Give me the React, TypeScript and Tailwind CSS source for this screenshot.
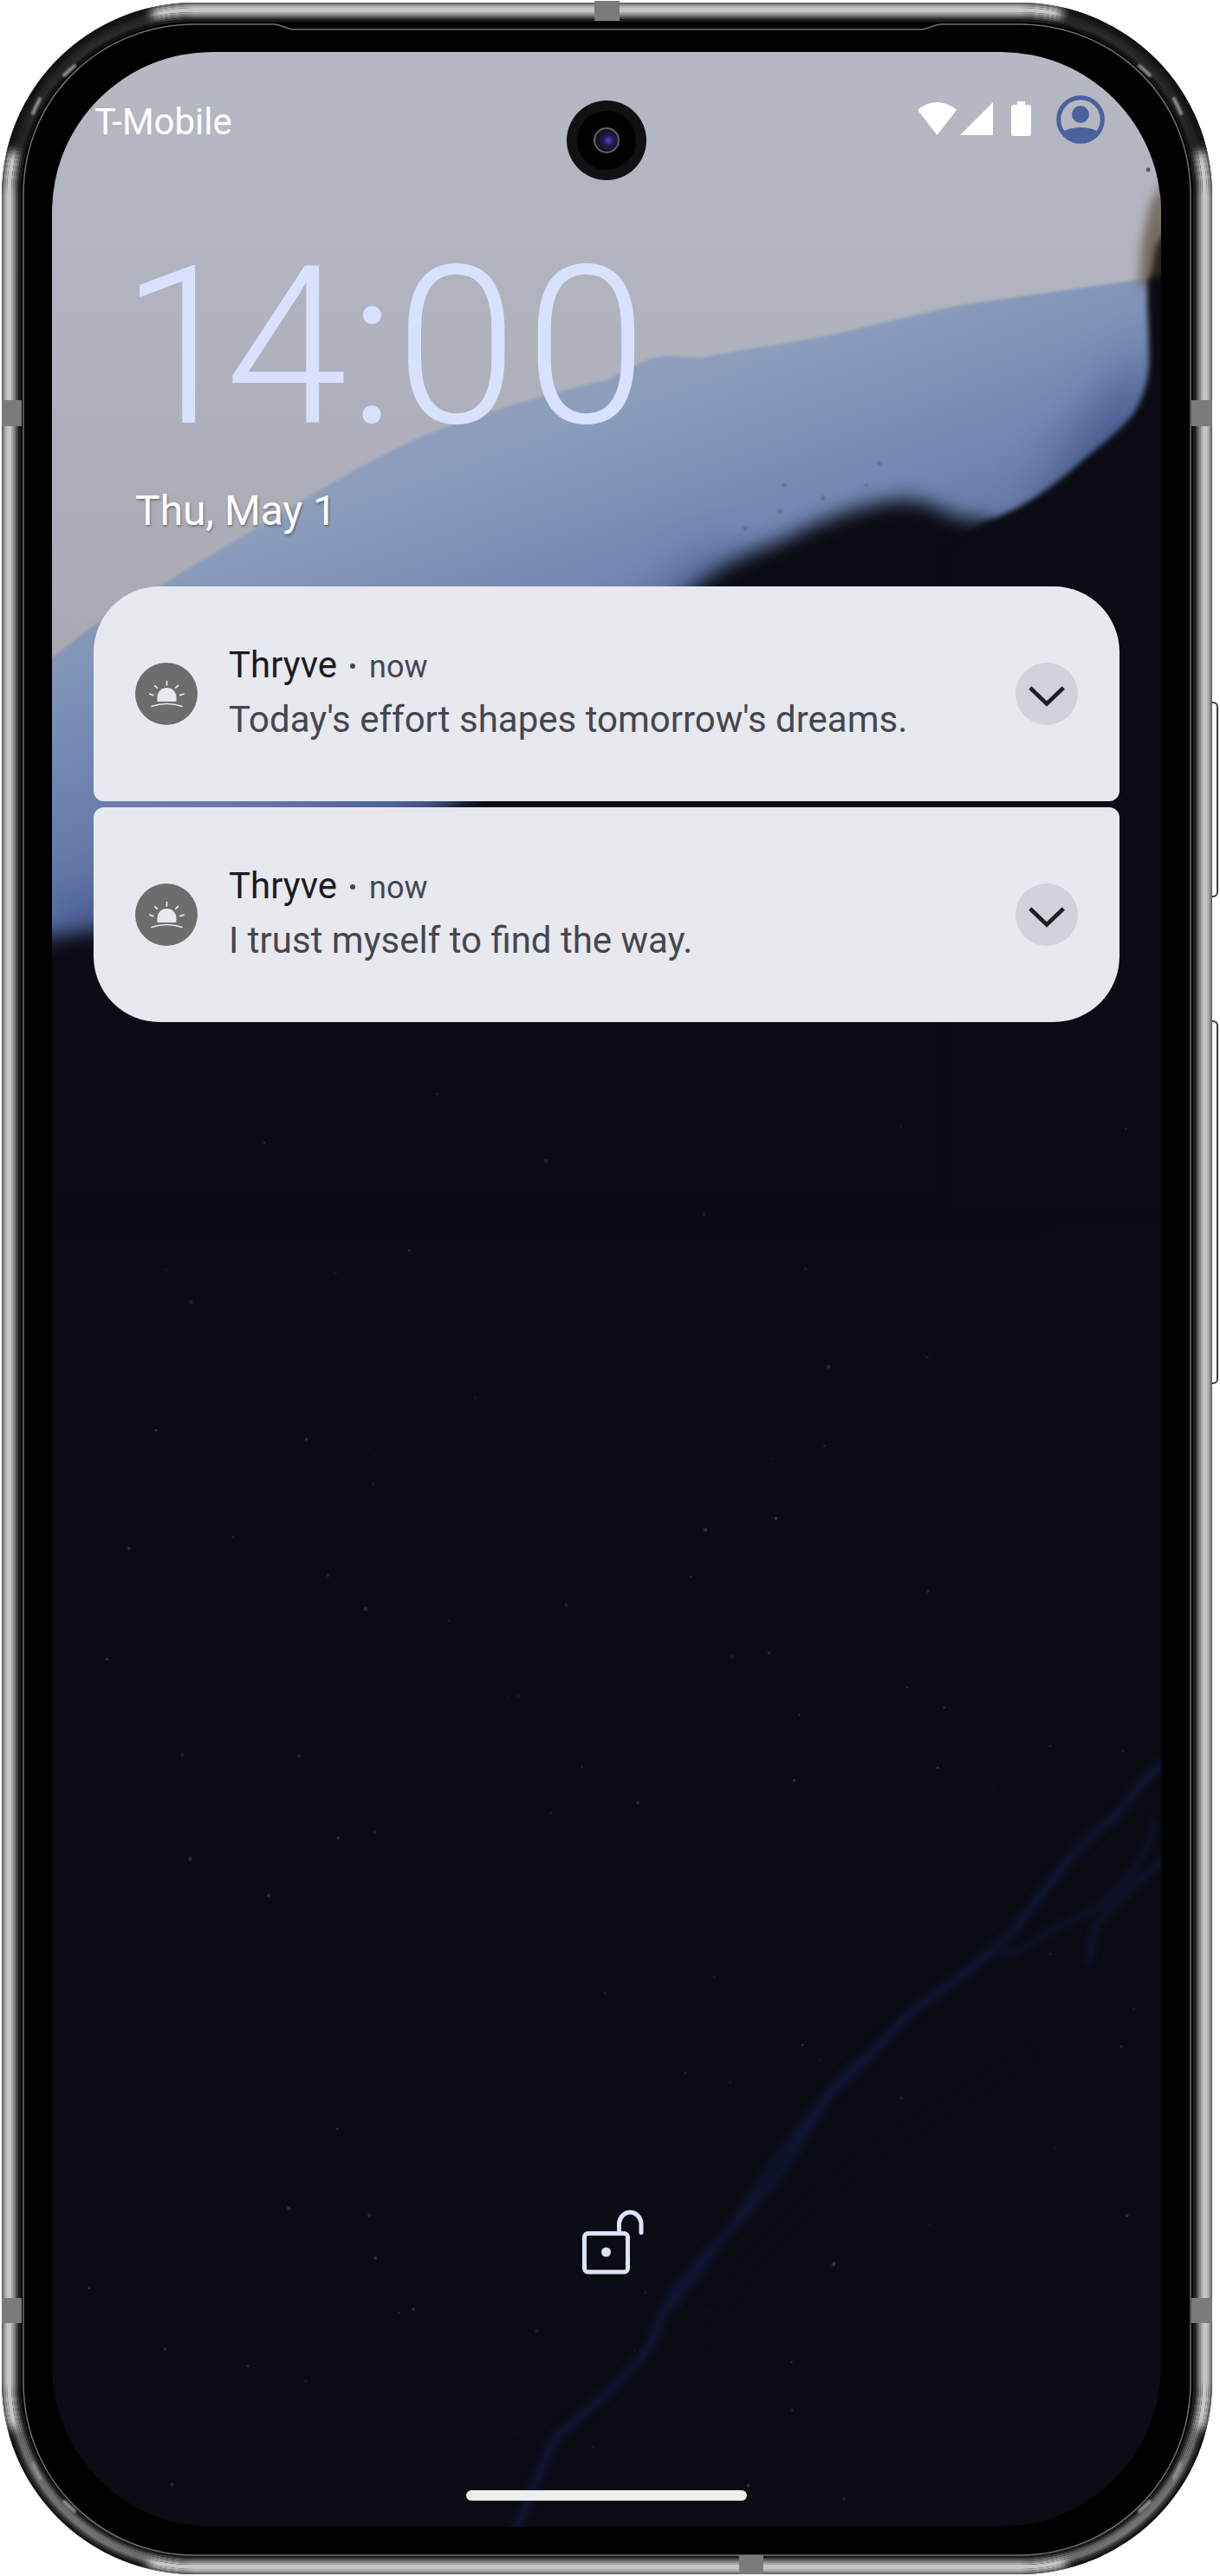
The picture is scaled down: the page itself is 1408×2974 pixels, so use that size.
import React from "react";

const roboto = "font-['Roboto',sans-serif]";

const speckles: { x: number; y: number; r: number; o: number }[] = (() => {
  const out: { x: number; y: number; r: number; o: number }[] = [];
  let s = 12345;
  const rnd = () => {
    s = (s * 1103515245 + 12345) & 0x7fffffff;
    return s / 0x7fffffff;
  };
  for (let i = 0; i < 90; i++) {
    out.push({
      x: 70 + rnd() * 1260,
      y: 1250 + rnd() * 1650,
      r: 1 + rnd() * 1.4,
      o: 0.04 + rnd() * 0.12,
    });
  }
  return out;
})();

function Wallpaper() {
  return (
    <svg className="absolute inset-0 h-full w-full" viewBox="60 60 1280 2857" preserveAspectRatio="none">
      <defs>
        <linearGradient id="sky" x1="0" y1="60" x2="0" y2="800" gradientUnits="userSpaceOnUse">
          <stop offset="0" stopColor="#b6b8c4" />
          <stop offset="0.45" stopColor="#b0b2bd" />
          <stop offset="1" stopColor="#a9a8b2" />
        </linearGradient>
        <linearGradient id="blue" x1="700" y1="470" x2="830" y2="840" gradientUnits="userSpaceOnUse">
          <stop offset="0" stopColor="#8c9ebc" />
          <stop offset="0.45" stopColor="#7388b2" />
          <stop offset="1" stopColor="#566b9e" />
        </linearGradient>
        <filter id="b1" x="-10%" y="-10%" width="120%" height="120%" colorInterpolationFilters="sRGB"><feGaussianBlur stdDeviation="1.5" /></filter>
        <filter id="b3" x="-10%" y="-10%" width="120%" height="120%" colorInterpolationFilters="sRGB"><feGaussianBlur stdDeviation="3" /></filter>
        <filter id="b6" x="-30%" y="-30%" width="160%" height="160%" colorInterpolationFilters="sRGB"><feGaussianBlur stdDeviation="6" /></filter>
        <filter id="b12" x="-20%" y="-20%" width="140%" height="140%" colorInterpolationFilters="sRGB"><feGaussianBlur stdDeviation="11" /></filter>
        <filter id="b30" x="-20%" y="-20%" width="140%" height="140%" colorInterpolationFilters="sRGB"><feGaussianBlur stdDeviation="28" /></filter>
        <filter id="v" x="-10%" y="-10%" width="120%" height="120%" colorInterpolationFilters="sRGB"><feGaussianBlur stdDeviation="4" /></filter>
      </defs>
      <rect x="60" y="60" width="1280" height="2857" fill="#0a0b13" />
      <rect x="60" y="60" width="1280" height="1100" fill="url(#sky)" />
      <path
        d="M40 775 L108 722 L357 573 C400 548 450 520 491 502 C560 476 640 452 700 439 C730 425 745 412 770 411 L810 413 C860 402 920 396 974 383 C1030 370 1070 360 1111 352 L1321 322 L1360 322 L1360 1200 L40 1200 Z"
        fill="url(#blue)"
        filter="url(#b1)"
      />
      <path
        d="M1240 500 L1330 400 L1340 600 L1000 700 L820 640 L600 860 L300 980 L60 1060 L60 1200 L1000 1000 Z"
        fill="#3f5488"
        opacity="0.8"
        filter="url(#b30)"
      />
      <path d="M1345 205 L1328 235 L1318 280 L1314 330 L1350 335 Z" fill="#6a5f50" opacity="0.85" filter="url(#b6)" />
      <path d="M1350 255 L1334 285 L1326 330 L1350 335 Z" fill="#221c15" opacity="0.9" filter="url(#b3)" />
      <path
        d="M1145 600 C1110 602 1095 592 1079 585 C1060 576 1040 574 1010 582 C975 590 940 604 900 625 C860 640 830 655 800 680 C730 740 680 790 640 830 C590 885 550 915 510 935 C420 970 300 1010 220 1040 C170 1060 130 1072 100 1076 L30 1086 L30 1400 L1200 1400 Z"
        fill="#0a0b13"
        filter="url(#b12)"
      />
      <path
        d="M1400 300 L1326 322 C1322 345 1326 370 1326 400 C1328 432 1322 455 1308 478 C1290 500 1270 514 1240 540 C1205 570 1170 592 1134 603 L1090 640 L1090 1400 L1400 1400 Z"
        fill="#0a0b13"
        filter="url(#b3)"
      />
      <circle cx="1325" cy="196" r="2.5" fill="#5e5d5e" />
      <g fill="#0a0b13" opacity="0.35" filter="url(#b1)">
        <circle cx="1015" cy="535" r="2" /><circle cx="1000" cy="560" r="1.5" /><circle cx="900" cy="590" r="2" />
        <circle cx="905" cy="560" r="2" /><circle cx="950" cy="575" r="2" /><circle cx="860" cy="610" r="2" />
      </g>
      <g fill="none" stroke="#111839" strokeLinecap="round" opacity="0.8" filter="url(#v)">
        <path strokeWidth="11" d="M1346 2034 C1320 2050 1300 2085 1284 2099 C1240 2130 1200 2190 1170 2229 C1130 2270 1080 2300 1042 2331 C1010 2370 985 2395 956 2420 C930 2460 905 2505 883 2530 C850 2570 825 2590 800 2619 C780 2640 765 2665 759 2688 C745 2730 680 2780 640 2815 C625 2850 610 2885 594 2925" />
        <path strokeWidth="7" d="M1042 2331 C1020 2350 1005 2370 975 2392 C950 2420 920 2460 890 2500 C860 2540 830 2600 775 2665" />
        <path strokeWidth="8" d="M1346 2146 C1320 2165 1290 2190 1266 2222 C1260 2240 1258 2250 1257 2263" />
        <path strokeWidth="6" d="M1330 2100 C1335 2125 1310 2160 1280 2190 C1260 2210 1230 2220 1211 2229 C1190 2245 1175 2255 1157 2256" />
        <path strokeWidth="3" stroke="#10131f" d="M1190 2370 C1130 2410 1060 2450 1000 2490 C950 2530 900 2570 860 2620 C840 2650 830 2680 820 2700" />
      </g>
      <g fill="#ffffff">
        {speckles.map((d, i) => (
          <circle key={i} cx={d.x} cy={d.y} r={d.r} opacity={d.o} />
        ))}
      </g>
    </svg>
  );
}

const corners = [
  "",
  "translate(1401 0) scale(-1 1)",
  "translate(0 2975) scale(1 -1)",
  "translate(1401 2975) scale(-1 -1)",
];

function ring(d: number, color: string, w = 2) {
  const i = d + w / 2;
  return (
    <rect
      key={d}
      x={2 + i}
      y={3 + i}
      width={1397 - 2 * i}
      height={2969 - 2 * i}
      rx={Math.max(222 - i, 0)}
      fill="none"
      stroke={color}
      strokeWidth={w}
    />
  );
}

function Frame() {
  return (
    <svg className="pointer-events-none absolute left-0 top-0 h-[2974px] w-[1408px]" viewBox="0 0 1408 2974">
      <defs>
        <filter id="fb" x="-30%" y="-30%" width="160%" height="160%" colorInterpolationFilters="sRGB"><feGaussianBlur stdDeviation="6" /></filter>
        <filter id="fs" x="-40%" y="-40%" width="180%" height="180%" colorInterpolationFilters="sRGB"><feGaussianBlur stdDeviation="1" /></filter>
        <clipPath id="phone"><rect x="2" y="3" width="1397" height="2969" rx="222" /></clipPath>
      </defs>
      <g fill="#ffffff" stroke="#3c3c3c" strokeWidth="2">
        <rect x="1392" y="811" width="13" height="224" rx="5" />
        <rect x="1392" y="1179" width="13" height="418" rx="5" />
      </g>
      {ring(0, "#6a6a6a", 2)}
      {ring(2, "#979797", 2)}
      {ring(4, "#b4b4b4", 2)}
      {ring(6, "#c6c6c6", 5)}
      {ring(11, "#a6a6a6", 2)}
      {ring(13, "#8a8a8a", 2)}
      {ring(15, "#666666", 2)}
      {ring(17, "#3e3e3e", 2)}
      {ring(19, "#1c1c1c", 3)}
      {ring(22, "#000000", 3)}
      <g clipPath="url(#phone)">
        {corners.map((t, i) => (
          <g key={i} transform={t}>
            {i < 2 ? (
              <path d="M14 175 A212 212 0 0 1 175 14" fill="none" stroke="#000000" strokeWidth="26" opacity="0.88" filter="url(#fb)" />
            ) : (
              <path d="M10 170 A216 216 0 0 1 170 10" fill="none" stroke="#000000" strokeWidth="18" opacity="0.92" filter="url(#fb)" />
            )}
            <path d="M38 131 A208 208 0 0 1 46 114" fill="none" stroke="#8f8f8f" strokeWidth="4" strokeLinecap="round" filter="url(#fs)" />
            <path d="M74 87 A208 208 0 0 1 86 76" fill="none" stroke="#8f8f8f" strokeWidth="4" strokeLinecap="round" filter="url(#fs)" />
          </g>
        ))}
      </g>
      <path
        d="M27 320 L27 225 C27 110 118 28 225 28 L315 28 C325 28 330 34 340 34 L1062 34 C1072 34 1077 28 1087 28 L1176 28 C1283 28 1374 110 1374 225 L1374 2750 C1374 2865 1283 2950 1176 2950 L225 2950 C118 2950 27 2865 27 2750 Z"
        fill="none"
        stroke="#6f6f6f"
        strokeWidth="1.5"
      />
      <g fill="#7a7c7a">
        <rect x="686" y="1" width="29" height="23" />
        <rect x="853" y="2950" width="28" height="22" />
        <rect x="2" y="462" width="23" height="30" />
        <rect x="1375" y="462" width="24" height="30" />
        <rect x="2" y="2653" width="23" height="29" />
        <rect x="1375" y="2653" width="24" height="29" />
      </g>
    </svg>
  );
}

function SunIcon() {
  return (
    <span className="flex h-[72px] w-[72px] shrink-0 items-center justify-center rounded-full bg-[#6d6d6d]">
      <svg width="72" height="72" viewBox="0 0 72 72" fill="none">
        <path d="M25.5 45 V40 A11 11 0 0 1 47.5 40 V45 Z" fill="#e8e8ef" />
        <g stroke="#e8e8ef" strokeWidth="1.7" strokeLinecap="round">
          <path d="M36.5 21.5 V26" />
          <path d="M22.8 26.8 L25.3 29.2" />
          <path d="M49.5 26.4 L46.8 29.2" />
          <path d="M16.8 36.2 L20.8 37.6" />
          <path d="M56 36.2 L51.8 37.6" />
          <path d="M19 50.5 Q36.5 44.5 54 50.5" />
        </g>
      </svg>
    </span>
  );
}

function Chevron() {
  return (
    <span className="flex h-[72px] w-[72px] shrink-0 items-center justify-center rounded-full bg-[#d2d2da]">
      <svg width="72" height="72" viewBox="0 0 72 72" fill="none">
        <path d="M16.8 29 L36 47.5 L55.4 29" stroke="#1f1f23" strokeWidth="4.6" />
      </svg>
    </span>
  );
}

function Notification({ text, corner }: { text: string; corner: string }) {
  return (
    <div className={`flex h-[248px] items-center bg-[#e8e8ef] pl-[48px] pr-[48px] ${corner}`}>
      <SunIcon />
      <div className="ml-[36px] flex min-w-0 flex-1 flex-col">
        <div className="-mt-[3px] flex h-[63px] items-baseline leading-[64px]">
          <span className="text-[42px] text-[#1b1b1f]">Thryve</span>
          <span className="ml-[15px] inline-block h-[6px] w-[6px] -translate-y-[10px] rounded-full bg-[#45464f]" />
          <span className="ml-[16px] text-[36px] text-[#45464f]">now</span>
        </div>
        <div className="h-[64px] text-[42px] leading-[64px] text-[#45464f]">{text}</div>
      </div>
      <Chevron />
    </div>
  );
}

function StatusIcons() {
  return (
    <div className="flex items-center">
      <svg width="45" height="38" viewBox="0 0 45 38" className="-mt-[2px]">
        <path d="M22.5 38 L0 9 C6 3.5 14 0 22.5 0 C31 0 39 3.5 45 9 Z" fill="#ffffff" />
      </svg>
      <svg width="38" height="38" viewBox="0 0 38 38" className="-mt-[2px] ml-[4px]">
        <path d="M38 0 V38 H0 Z" fill="#ffffff" />
      </svg>
      <svg width="23" height="40" viewBox="0 0 23 40" className="-mt-[2px] ml-[21px]">
        <path d="M7 0 H16 V4 H20 A3 3 0 0 1 23 7 V37 A3 3 0 0 1 20 40 H3 A3 3 0 0 1 0 37 V7 A3 3 0 0 1 3 4 H7 Z" fill="#ffffff" />
      </svg>
      <svg width="56" height="56" viewBox="0 0 56 56" className="ml-[29px]">
        <defs>
          <clipPath id="av"><circle cx="28" cy="28" r="23" /></clipPath>
        </defs>
        <circle cx="28" cy="28" r="25.3" fill="none" stroke="#4a629b" strokeWidth="5" />
        <circle cx="28" cy="22" r="10" fill="#4a629b" />
        <ellipse cx="28" cy="57" rx="31" ry="20" fill="#4a629b" clipPath="url(#av)" />
      </svg>
    </div>
  );
}

function LockIcon() {
  return (
    <svg width="90" height="84" viewBox="655 2546 90 84" fill="none" stroke="#dde2fb">
      <rect x="674.5" y="2578.5" width="50" height="44.5" rx="4" strokeWidth="5" />
      <path d="M714.5 2576 V2566 A13 15 0 0 1 740 2566 V2577.5" strokeWidth="5" strokeLinecap="round" />
      <circle cx="699.5" cy="2600" r="5.5" fill="#dde2fb" stroke="none" />
    </svg>
  );
}

function Camera() {
  return (
    <div className="absolute left-[594px] top-[56px] flex h-[92px] w-[92px] items-center justify-center rounded-full bg-[#111113]">
      <div className="flex h-[68px] w-[68px] items-center justify-center rounded-full bg-black">
        <div className="h-[30px] w-[30px] rounded-full border-2 border-[#5b6266] bg-[radial-gradient(circle_at_58%_50%,#5b3fd0_0%,#241a55_30%,#10121f_62%,#2a3036_100%)]" />
      </div>
    </div>
  );
}

export default function App() {
  return (
    <div className={`relative h-[2974px] w-[1408px] overflow-hidden bg-white ${roboto}`}>
      <div className="ml-[2px] mt-[3px] h-[2969px] w-[1397px] rounded-[222px] bg-black pl-[58px] pt-[57px]">
        <div className="relative flex h-[2857px] w-[1280px] flex-col overflow-hidden rounded-[185px]">
          <Wallpaper />
          <Camera />
          <div className="relative flex h-full flex-col">
            <div className="mt-[50px] flex h-[56px] items-center justify-between pl-[49px] pr-[65px]">
              <span className="mt-[5px] text-[42px] leading-[48px] text-white">T-Mobile</span>
              <StatusIcons />
            </div>
            <div className="ml-[79px] mt-[103px] flex h-[264px] text-[254px] font-light leading-[264px] text-[#d8e2ff]">
              <span className="tracking-[-20px]">1</span>
              <span className="tracking-[2px]">4</span>
              <span>:</span>
              <span className="tracking-[9px]">0</span>
              <span>0</span>
            </div>
            <div className="ml-[96px] mt-[30px] text-[48px] leading-[54px] text-white [text-shadow:1px_2px_3px_rgba(0,0,0,0.35)]">Thu, May 1</div>
            <div className="mx-[48px] mt-[60px] flex flex-col gap-[7px]">
              <Notification
                text="Today's effort shapes tomorrow's dreams."
                corner="rounded-tl-[76px] rounded-tr-[76px] rounded-bl-[12px] rounded-br-[12px]"
              />
              <Notification
                text="I trust myself to find the way."
                corner="rounded-tl-[12px] rounded-tr-[12px] rounded-bl-[76px] rounded-br-[76px]"
              />
            </div>
            <div className="mt-auto flex justify-center">
              <LockIcon />
            </div>
            <div className="mx-auto mb-[30px] mt-[245px] h-[12px] w-[324px] rounded-full bg-[#eeeeee]" />
          </div>
        </div>
      </div>
      <Frame />
    </div>
  );
}
